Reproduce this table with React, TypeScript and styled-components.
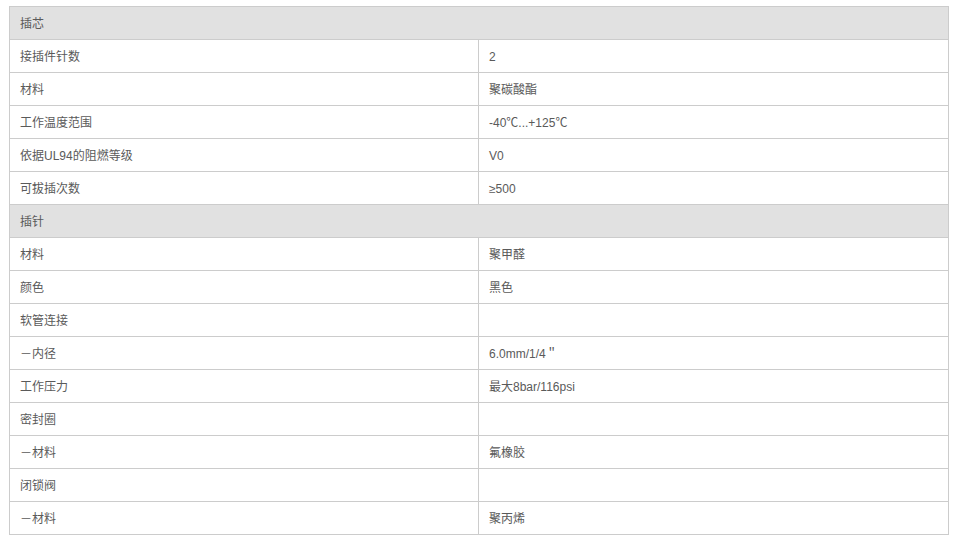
import React from "react";
import styled, { createGlobalStyle } from "styled-components";

const Global = createGlobalStyle`
  html, body { margin: 0; padding: 0; background: #fff; }
  body { font-family: "Liberation Sans", Arial, "Noto Sans CJK SC", sans-serif; }
`;

const Wrap = styled.div`
  padding: 6px 16px 0 9px;
`;

const Table = styled.table`
  width: 940px;
  border-collapse: collapse;
  table-layout: fixed;
  font-size: 12px;
  color: #5a5a5a;
`;

const Row = styled.tr<{ $head?: boolean }>`
  height: 33px;
  background: ${(p) => (p.$head ? "#e1e1e1" : "#fff")};
`;

const Cell = styled.td<{ $w?: number }>`
  border: 1px solid #ccc;
  padding: 2px 10px 0;
  ${(p) => (p.$w ? `width: ${p.$w}px;` : "")}
  box-sizing: border-box;
  vertical-align: middle;
  line-height: 16px;
`;

type R = { h?: string; k?: string; v?: string };

const rows: R[] = [
  { h: "插芯" },
  { k: "接插件针数", v: "2" },
  { k: "材料", v: "聚碳酸酯" },
  { k: "工作温度范围", v: "-40℃...+125℃" },
  { k: "依据UL94的阻燃等级", v: "V0" },
  { k: "可拔插次数", v: "≥500" },
  { h: "插针" },
  { k: "材料", v: "聚甲醛" },
  { k: "颜色", v: "黑色" },
  { k: "软管连接", v: "" },
  { k: "－内径", v: "6.0mm/1/4＂" },
  { k: "工作压力", v: "最大8bar/116psi" },
  { k: "密封圈", v: "" },
  { k: "－材料", v: "氟橡胶" },
  { k: "闭锁阀", v: "" },
  { k: "－材料", v: "聚丙烯" },
];

export default function App() {
  return (
    <Wrap>
      <Global />
      <Table>
        <colgroup>
          <col style={{ width: 469 }} />
          <col />
        </colgroup>
        <tbody>
          {rows.map((r, i) =>
            r.h ? (
              <Row key={i} $head>
                <Cell colSpan={2}>{r.h}</Cell>
              </Row>
            ) : (
              <Row key={i}>
                <Cell>{r.k}</Cell>
                <Cell>{r.v}</Cell>
              </Row>
            )
          )}
        </tbody>
      </Table>
    </Wrap>
  );
}
